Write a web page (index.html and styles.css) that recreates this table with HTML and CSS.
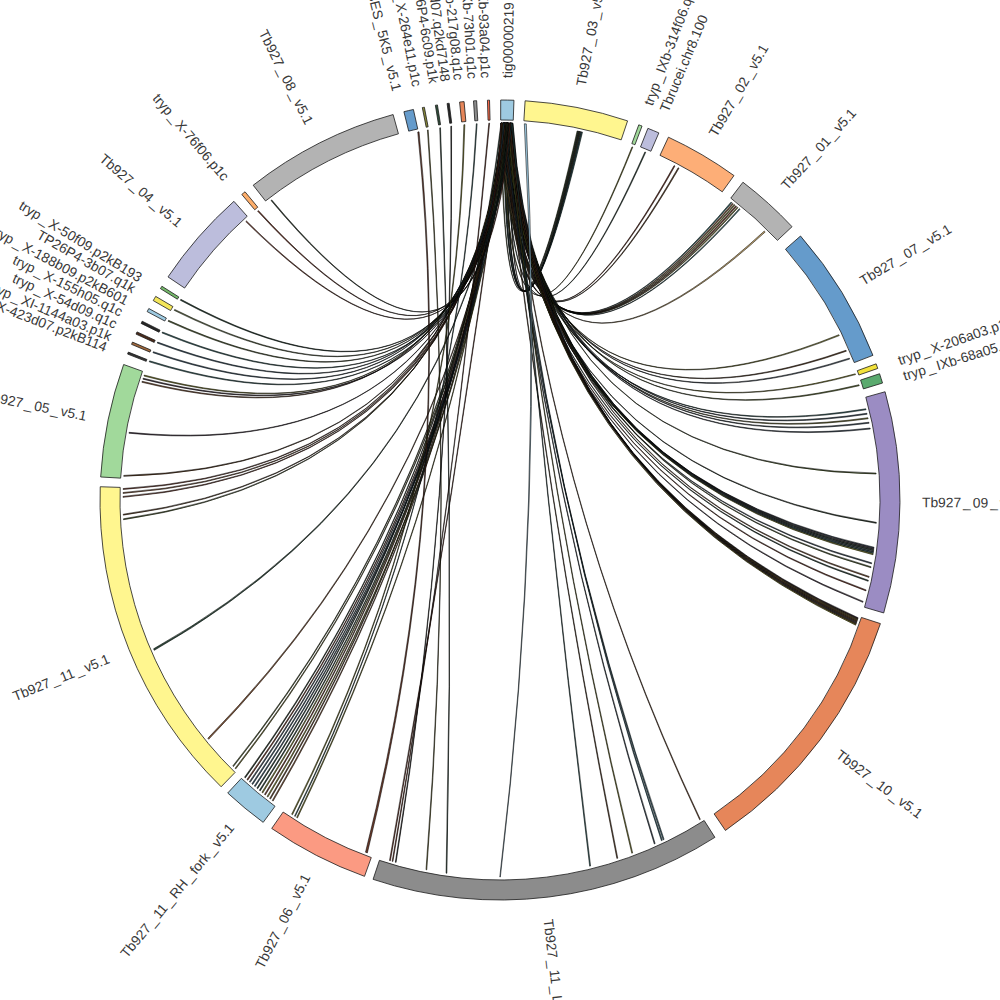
FILE: index.html
```html
<!DOCTYPE html>
<html lang="en">
<head>
<meta charset="utf-8">
<title>Circos link diagram</title>
<link rel="stylesheet" href="styles.css">
</head>
<body>
<svg id="circos" class="chart" width="1000" height="1000" viewBox="0 0 1000 1000" xmlns="http://www.w3.org/2000/svg">
  <g id="links" class="links"></g>
  <g id="segments" class="segments"></g>
  <g id="labels" class="labels"></g>
</svg>
<script src="script.js"></script>
</body>
</html>
```

FILE: styles.css
```css
html, body {
  margin: 0;
  padding: 0;
  background: #ffffff;
}

.chart {
  display: block;
  width: 1000px;
  height: 1000px;
}

.seg {
  stroke: #1a1a1a;
  stroke-width: 0.8;
  stroke-linejoin: miter;
}

.link {
  stroke: #000000;
  stroke-width: 0.55;
  stroke-linejoin: round;
}

.lbl {
  font-family: "Liberation Sans", "DejaVu Sans", sans-serif;
  font-size: 13.8px;
  fill: #383838;
  dominant-baseline: central;
}
```

FILE: script.js
```javascript
(function () {
  var NS = 'http://www.w3.org/2000/svg';
  var CX = 500, CY = 500, RI = 380, RO = 400, RL = 377, RT = 422, BR = 45;

  var gLinks = document.getElementById('links');
  var gSegs = document.getElementById('segments');
  var gLbls = document.getElementById('labels');

  function P(a, r) {
    var t = a * Math.PI / 180;
    return [CX + r * Math.sin(t), CY - r * Math.cos(t)];
  }
  function f(p) { return p[0].toFixed(2) + ' ' + p[1].toFixed(2); }
  function el(tag, attrs, parent) {
    var e = document.createElementNS(NS, tag);
    for (var k in attrs) e.setAttribute(k, attrs[k]);
    parent.appendChild(e);
    return e;
  }

  /* ---------- segments: [start, end, fill] (degrees clockwise from top) ---------- */
  var segs = [
    [0.1, 2.0, '#9ecae1'],     // tig00000219
    [3.6, 18.6, '#fff68f'],    // Tb927_03
    [20.3, 20.8, '#a1d99b'],   // tryp_IXb-314f06
    [21.7, 23.4, '#bcbddc'],   // Tbrucei.chr8.100
    [24.9, 35.8, '#fdae77'],   // Tb927_02
    [37.4, 46.9, '#b3b3b3'],   // Tb927_01
    [48.7, 68.8, '#659bcb'],   // Tb927_07
    [70.1, 70.8, '#f2e23c'],   // tryp_X-206a03
    [71.6, 73.0, '#5aaa6e'],   // tryp_IXb-68a05
    [74.3, 106.4, '#9b8cc3'],  // Tb927_09
    [108.0, 145.7, '#e6865a'], // Tb927_10
    [147.5, 198.5, '#8c8c8c'], // Tb927_11 (bottom)
    [199.8, 214.8, '#fb9a82'], // Tb927_06
    [216.3, 222.9, '#9ecae1'], // Tb927_11_RH_fork
    [224.2, 271.9, '#fff68f'], // Tb927_11
    [273.3, 289.8, '#a1d99b'], // Tb927_05
    [291.4, 291.7, '#333333'],
    [292.9, 293.25, '#a0683c'],
    [294.5, 294.85, '#4a2a1a'],
    [296.2, 296.55, '#262626'],
    [298.1, 298.6, '#9ecae1'],
    [299.9, 300.6, '#f4e65a'],
    [301.9, 302.3, '#74b86a'],
    [303.9, 318.3, '#bcbddc'], // Tb927_04
    [319.8, 320.4, '#fdae6b'], // tryp_X-76f06
    [321.9, 344.5, '#b3b3b3'], // Tb927_08
    [346.1, 347.5, '#659bcb'], // 5K5
    [348.8, 349.1, '#8a8a3a'],
    [350.7, 351.0, '#2f4f3a'],
    [352.4, 352.7, '#262626'],
    [354.2, 354.85, '#e6865a'],
    [356.2, 356.65, '#8c8c8c'],
    [358.2, 358.5, '#fb6a4a']
  ];

  segs.forEach(function (s) {
    var a1 = s[0], a2 = s[1];
    var large = (a2 - a1) > 180 ? 1 : 0;
    var d = 'M' + f(P(a1, RO)) + ' A' + RO + ' ' + RO + ' 0 ' + large + ' 1 ' + f(P(a2, RO)) +
      ' L' + f(P(a2, RI)) + ' A' + RI + ' ' + RI + ' 0 ' + large + ' 0 ' + f(P(a1, RI)) + ' Z';
    el('path', { d: d, fill: s[2], 'class': 'seg' }, gSegs);
  });

  /* ---------- labels: [text, angle] ---------- */
  var labels = [
    ['tig00000219', 1.0],
    ['Tb927_03_v5.1', 11.0],
    ['tryp_IXb-314f06.q1c', 20.5],
    ['Tbrucei.chr8.100', 22.8],
    ['Tb927_02_v5.1', 30.2],
    ['Tb927_01_v5.1', 42.2],
    ['Tb927_07_v5.1', 58.8],
    ['tryp_X-206a03.p1k', 70.7],
    ['tryp_IXb-68a05.q1c', 72.9],
    ['Tb927_09_v5.1', 90.3],
    ['Tb927_10_v5.1', 126.8],
    ['Tb927_11_LH_fork_v5.1', 173.4],
    ['Tb927_06_v5.1', 207.3],
    ['Tb927_11_RH_fork_v5.1', 219.6],
    ['Tb927_11_v5.1', 248.0],
    ['Tb927_05_v5.1', 281.5],
    ['tryp_X-423d07.p2kB114', 291.2],
    ['tryp_XI-1144a03.p1k', 292.8],
    ['tryp_X-54d09.q1c', 294.6],
    ['tryp_X-155h05.q1c', 296.4],
    ['tryp_X-188b09.p2kB601', 298.1],
    ['TP26P4-3b07.q1k', 300.0],
    ['tryp_X-50f09.p2kB193', 301.7],
    ['Tb927_04_v5.1', 310.8],
    ['tryp_X-76f06.p1c', 319.6],
    ['Tb927_08_v5.1', 333.2],
    ['Tb927_BES_5K5_v5.1', 345.9],
    ['tryp_X-264e11.p1c', 348.7],
    ['TP26P4-6c09.p1k', 351.0],
    ['tryp_X-117d07.q2kd7148', 352.6],
    ['tryp_IXb-217g08.q1c', 354.4],
    ['tryp_IXb-73h01.q1c', 356.3],
    ['tryp_IXb-93a04.p1c', 358.1]
  ];

  labels.forEach(function (l) {
    var a = l[1];
    var flip = a >= 180;
    var tr = 'translate(' + CX + ' ' + CY + ') rotate(' + (a - 90).toFixed(2) + ') translate(' + RT + ' 0)' +
      (flip ? ' rotate(180)' : '');
    var t = el('text', { 'class': 'lbl', transform: tr, 'text-anchor': flip ? 'end' : 'start' }, gLbls);
    var parts = l[0].split('_');
    parts.forEach(function (part, i) {
      if (i > 0) {
        var u = el('tspan', { dx: '2' }, t);
        u.textContent = '_';
      }
      var s = el('tspan', i > 0 ? { dx: '2' } : {}, t);
      s.textContent = part;
    });
  });

  /* ---------- links ---------- */
  var seed = 11;
  function rnd() {
    seed = (seed * 16807) % 2147483647;
    return (seed - 1) / 2147483646;
  }
  var palette = ['#2e4a3c', '#6b4a2e', '#7d7a3a', '#3c5a6e', '#4a3a4a', '#5a6a3a',
    '#8a5a3a', '#2a3a2a', '#3a6a6a', '#7a3a2a', '#8a8a30', '#445566'];

  function ctrl(a, b) {
    var d = ((b - a) % 360 + 360) % 360;
    var mid = d <= 180 ? a + d / 2 : a - (360 - d) / 2;
    return P(mid, BR);
  }
  function ribbon(a1, w1, a2, w2, fill) {
    var c = ctrl(a1 + w1 / 2, a2 + w2 / 2);
    var p1 = P(a1, RL), p2 = P(a1 + w1, RL), q1 = P(a2, RL), q2 = P(a2 + w2, RL);
    var d = 'M' + f(p1) + ' Q' + f(c) + ' ' + f(q2) + ' L' + f(q1) + ' Q' + f(c) + ' ' + f(p2) + ' Z';
    el('path', { d: d, fill: fill, 'class': 'link' }, gLinks);
  }
  function toTig(a, w, color) {
    var t = 0.12 + rnd() * 1.72;
    var col = color || palette[Math.floor(rnd() * palette.length)];
    ribbon(t, 0.13, a, w || 0.14, col);
  }
  function many(list, w, color) {
    list.forEach(function (a) { toTig(a, w, color); });
  }

  many([11.8, 11.95, 12.1, 12.2, 12.35, 12.5], 0.14);
  toTig(20.5, 0.12, '#8a8a3a');
  toTig(22.6, 0.14, '#2e4a3c');
  many([27.5, 28.2], 0.15);
  many([37.8, 38.1, 38.4, 38.7, 39.0, 39.4], 0.15);
  toTig(44.5, 0.2, '#c8aa70');
  many([64.0, 66.6, 67.9], 0.15);
  toTig(70.45, 0.12, '#9a9a30');
  toTig(72.2, 0.15, '#6a7a3a');
  many([76.0, 76.7, 77.4, 78.1, 79.0], 0.15);
  many([85.9, 93.4], 0.15);
  many([97.2, 97.4, 97.6, 97.8, 98.0, 98.2], 0.15);
  many([99.6, 100.2, 101.7, 102.3, 103.8, 105.6], 0.15);
  many([108.2, 108.35, 108.5, 108.65, 108.8, 108.95, 109.1, 109.25], 0.14);
  toTig(147.9, 0.12);
  many([154.2, 154.5], 0.15, '#3a6a7a');
  many([155.7, 159.4, 161.8, 166.1], 0.14);
  toTig(196.9, 0.14);
  toTig(212.5, 0.14);
  many([217.0, 217.5, 218.0, 218.5, 219.0, 219.5, 220.0, 220.5, 221.0, 221.5, 222.0, 222.5], 0.16);
  many([224.5, 225.0], 0.14);
  toTig(230.6, 0.2, '#8a5a3a');
  toTig(246.5, 0.25, '#2e4a3c');
  many([267.0, 267.7], 0.14);
  many([270.4, 271.0, 271.6], 0.14);
  many([273.6, 280.2], 0.14);
  many([288.2, 288.7, 289.2], 0.15);
  many([291.5, 293.0, 294.6, 296.3, 298.3, 300.2, 302.0], 0.16);
  many([317.6, 320.0, 322.6], 0.14);

  ribbon(3.7, 0.3, 179.95, 0.08, '#9ecae1');
  ribbon(347.4, 0.2, 200.6, 0.3, '#6b3a2a');
  ribbon(348.9, 0.12, 191.2, 0.12, '#7d7a3a');
  ribbon(350.8, 0.12, 188.1, 0.12, '#2e4a3c');
  ribbon(352.5, 0.12, 196.0, 0.12, '#2a2a2a');
  ribbon(354.5, 0.15, 213.4, 0.15, '#8a8a30');
  ribbon(356.4, 0.12, 212.9, 0.12, '#3a6a6a');
  ribbon(358.3, 0.12, 196.5, 0.12, '#7a3a2a');
})();
```
